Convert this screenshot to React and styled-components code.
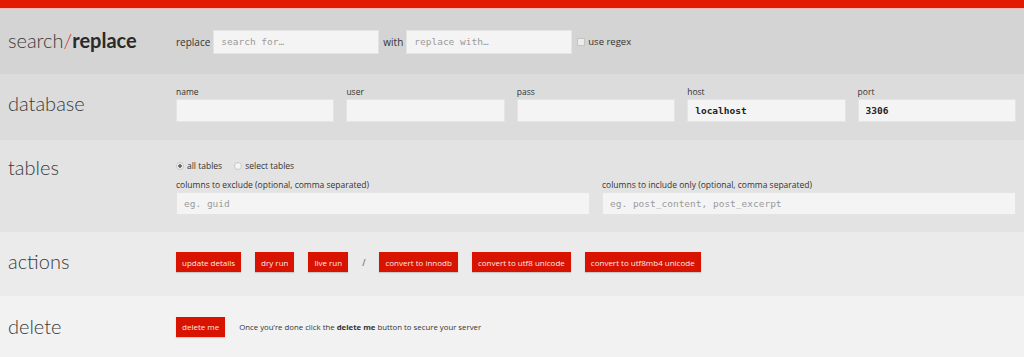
import React from "react";
import styled, { createGlobalStyle } from "styled-components";

const GlobalStyle = createGlobalStyle`
  body {
    margin: 0;
    font-family: "Open Sans", "Liberation Sans", sans-serif;
    color: #333;
    background: #f2f2f2;
  }
`;

const TopBar = styled.div`
  height: 8px;
  background: #e21a00;
  border-bottom: 1px solid #f1bdb6;
`;

const Section = styled.section`
  display: flex;
  align-items: ${(p) => (p.$top ? "flex-start" : "center")};
  background: ${(p) => p.$bg};
  height: ${(p) => p.$height}px;
  box-sizing: border-box;
  padding-top: ${(p) => p.$padTop || 0}px;
`;

const Heading = styled.h2`
  width: 176px;
  flex-shrink: 0;
  margin: 0;
  padding-left: 8px;
  box-sizing: border-box;
  font-family: Lato, "Open Sans", sans-serif;
  font-weight: 300;
  font-size: 20px;
  line-height: 24px;
  color: #3a3a3a;
  ${(p) => p.$offset && `margin-top: ${p.$offset}px;`}
`;

const Slash = styled.span`
  color: #d42a1c;
`;

const Strong = styled.span`
  font-weight: 700;
  color: #2a2a2a;
`;

const Content = styled.div`
  flex: 1;
  padding-right: 8px;
  display: flex;
  flex-direction: column;
`;

const InlineRow = styled.div`
  display: flex;
  align-items: center;
  gap: ${(p) => p.$gap || 3}px;
  font-size: 10px;
  color: #333;
`;

const TextInput = styled.input`
  box-sizing: border-box;
  width: ${(p) => (p.$width ? `${p.$width}px` : "100%")};
  height: ${(p) => p.$h || 23}px;
  border: 1px solid #e4e4e4;
  background: #f4f4f4;
  padding: 0 7px;
  font-family: "DejaVu Sans Mono", "Liberation Mono", monospace;
  font-size: 9.5px;
  font-weight: ${(p) => (p.$bold ? 700 : 400)};
  color: #222;
  outline: none;
  &::placeholder {
    color: #9a9a9a;
  }
`;

const Check = styled.span`
  display: inline-block;
  width: 6px;
  height: 6px;
  border: 1px solid #c4c4c4;
  background: #ececec;
  margin-left: 2px;
`;

const Grid = styled.div`
  display: grid;
  grid-template-columns: repeat(${(p) => p.$cols}, 1fr);
  column-gap: 12px;
`;

const Field = styled.div`
  display: flex;
  flex-direction: column;
`;

const Label = styled.label`
  font-size: 8.5px;
  color: #333;
  margin-bottom: 2px;
  line-height: 10px;
`;

const Radios = styled.div`
  display: flex;
  align-items: center;
  gap: 12px;
  font-size: 8.5px;
  margin-bottom: 9px;
`;

const Radio = styled.span`
  display: inline-flex;
  align-items: center;
  gap: 3px;
  &::before {
    content: "";
    width: 6px;
    height: 6px;
    border-radius: 50%;
    border: 1px solid #c8c8c8;
    background: ${(p) =>
      p.$on ? "radial-gradient(circle, #666 0 1.5px, #f4f4f4 2px)" : "#f4f4f4"};
  }
`;

const Buttons = styled.div`
  display: flex;
  align-items: center;
  gap: 14px;
`;

const Button = styled.button`
  background: #d81300;
  color: #fbe9e6;
  border: none;
  height: 20px;
  padding: 0 6px;
  font-family: "Open Sans", "Liberation Sans", sans-serif;
  font-size: 8px;
  cursor: pointer;
  box-shadow: 0 1px 1px rgba(0, 0, 0, 0.15);
`;

const Sep = styled.span`
  font-size: 9px;
  color: #555;
`;

const Note = styled.span`
  font-size: 7.8px;
  color: #333;
  margin-left: 11px;
  b {
    font-weight: 700;
  }
`;

export default function App() {
  return (
    <>
      <GlobalStyle />
      <TopBar />
      <Section $bg="#d4d4d4" $height={65}>
        <Heading $offset={-3}>
          search<Slash>/</Slash>
          <Strong>replace</Strong>
        </Heading>
        <Content>
          <InlineRow>
            <span>replace</span>
            <TextInput $width={166} $h={24} placeholder="search for…" />
            <span style={{ marginLeft: 1 }}>with</span>
            <TextInput $width={166} $h={24} placeholder="replace with…" />
            <Check />
            <span style={{ fontSize: 9.5 }}>use regex</span>
          </InlineRow>
        </Content>
      </Section>
      <Section $bg="#dcdcdc" $height={66} $top $padTop={13}>
        <Heading $offset={4}>database</Heading>
        <Content>
          <Grid $cols={5}>
            <Field>
              <Label>name</Label>
              <TextInput />
            </Field>
            <Field>
              <Label>user</Label>
              <TextInput />
            </Field>
            <Field>
              <Label>pass</Label>
              <TextInput type="password" />
            </Field>
            <Field>
              <Label>host</Label>
              <TextInput $bold defaultValue="localhost" />
            </Field>
            <Field>
              <Label>port</Label>
              <TextInput $bold defaultValue="3306" />
            </Field>
          </Grid>
        </Content>
      </Section>
      <Section $bg="#e3e3e3" $height={92} $top $padTop={20}>
        <Heading $offset={-5}>tables</Heading>
        <Content>
          <Radios>
            <Radio $on>all tables</Radio>
            <Radio>select tables</Radio>
          </Radios>
          <Grid $cols={2}>
            <Field>
              <Label>columns to exclude (optional, comma separated)</Label>
              <TextInput placeholder="eg. guid" />
            </Field>
            <Field>
              <Label>columns to include only (optional, comma separated)</Label>
              <TextInput placeholder="eg. post_content, post_excerpt" />
            </Field>
          </Grid>
        </Content>
      </Section>
      <Section $bg="#ebebeb" $height={64} $top $padTop={20}>
        <Heading $offset={-3}>actions</Heading>
        <Content>
          <Buttons>
            <Button>update details</Button>
            <Button>dry run</Button>
            <Button>live run</Button>
            <Sep>/</Sep>
            <Button>convert to innodb</Button>
            <Button>convert to utf8 unicode</Button>
            <Button>convert to utf8mb4 unicode</Button>
          </Buttons>
        </Content>
      </Section>
      <Section $bg="#f2f2f2" $height={61}>
        <Heading $offset={-2}>delete</Heading>
        <Content>
          <InlineRow>
            <Button>delete me</Button>
            <Note>
              Once you’re done click the <b>delete me</b> button to secure your
              server
            </Note>
          </InlineRow>
        </Content>
      </Section>
    </>
  );
}
